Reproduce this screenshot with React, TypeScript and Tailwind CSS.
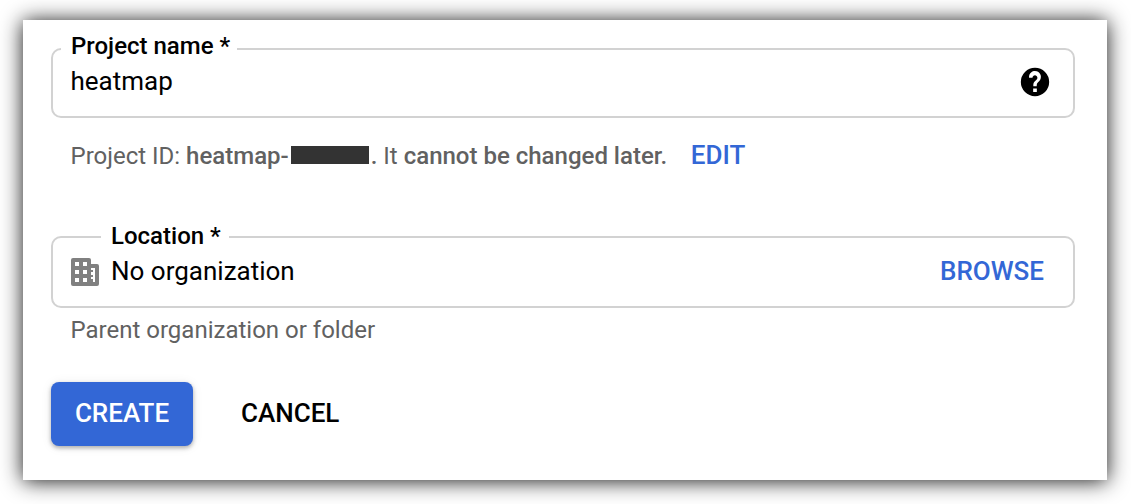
export default function App() {
  return (
    <main className="flex h-[504px] w-[1131px] bg-white pl-[23px] pt-5 font-['Roboto',sans-serif] text-2xl text-black">
      <section className="flex h-[460px] w-[1084px] flex-col bg-white pl-7 pr-8 pt-7 shadow-[0_1px_20px_rgba(0,0,0,0.92)]">
        <div className="relative flex h-[70px] items-center justify-between rounded-[10px] border-2 border-[#d2d2d2] pb-[3px] pl-[17.5px] pr-[21px]">
          <label className="absolute -top-[18px] left-2 bg-white pl-2.5 pr-[7px] font-medium leading-7">Project name *</label>
          <span className="text-[26px]">heatmap</span>
          <svg className="mt-px size-[34px]" viewBox="0 0 24 24"><path d="M12 2a10 10 0 1 0 0 20 10 10 0 0 0 0-20zm1.3 17h-2.6v-2.5h2.6V19zm1.77-7.75-.9.92C13.45 12.9 13.2 13.5 13.2 15h-2.4v-.5c0-1.1.25-2.1.97-2.83l1.44-1.46A1.75 1.75 0 1 0 10.2 9H7.8a4.2 4.2 0 1 1 7.27 2.25z" /></svg>
        </div>
        <div className="mt-6 flex h-7 items-center pl-[19.5px] text-[#616161]">
          <span>Project ID:&nbsp;</span><b className="font-medium">heatmap-</b><i className="mr-0.5 ml-0.5 h-[18px] w-[78px] -translate-y-px bg-[#333]" /><b className="font-medium">.</b><span>&nbsp;It&nbsp;</span><b className="font-medium">cannot be changed later.</b>
          <button className="ml-[23.5px] -translate-y-px text-[26px] font-medium text-[#3367d6]">EDIT</button>
        </div>
        <div className="relative mt-[66px] flex h-[72px] items-center rounded-[10px] border-2 border-[#d2d2d2] pb-0.5 pl-[15px] pr-[29px]">
          <label className="absolute -top-4 left-12 bg-white pl-2.5 pr-2 font-medium leading-7">Location *</label>
          <svg className="mr-[9px] mt-0.5 size-[34px] fill-[#808080]" viewBox="0 0 34 34"><path fillRule="evenodd" d="M5 3h16a2 2 0 0 1 2 2v4h6a2 2 0 0 1 2 2v18a2 2 0 0 1-2 2H5a2 2 0 0 1-2-2V5a2 2 0 0 1 2-2zM7 7v4h4V7zm8 0v4h4V7zM7 15v4h4v-4zm8 0v4h4v-4zM7 23v4h4v-4zm8 0v4h4v-4zM23 13v2h2v2h-2v3h2v2h-2v2h2v3h2V13z" /></svg>
          <span className="text-[26px]">No organization</span>
          <button className="ml-auto text-[26px] font-medium text-[#3367d6]">BROWSE</button>
        </div>
        <p className="mt-2 pl-[19.5px] leading-7 text-[#616161]">Parent organization or folder</p>
        <div className="mt-[38px] flex h-16 items-center text-[26px] font-medium">
          <button className="h-16 w-[142px] rounded-lg bg-[#3367d6] pb-0.5 text-white shadow-[0_2px_4px_rgba(0,0,0,0.3),0_1px_12px_rgba(0,0,0,0.07)]">CREATE</button>
          <button className="ml-12 pb-0.5">CANCEL</button>
        </div>
      </section>
    </main>
  );
}
